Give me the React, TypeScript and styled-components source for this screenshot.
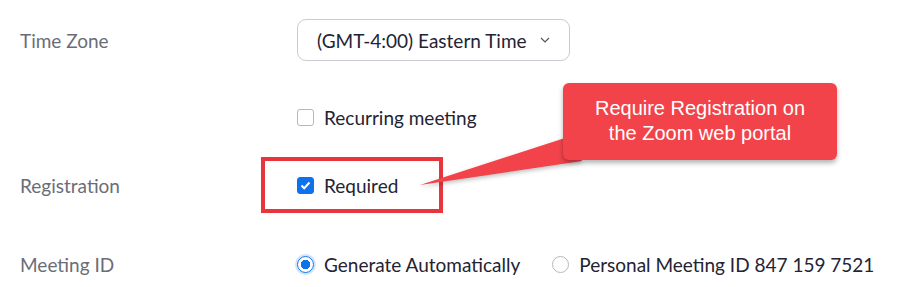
import { FC } from 'react';
import styled, { createGlobalStyle } from 'styled-components';

const GlobalStyle = createGlobalStyle`
  html, body {
    margin: 0;
    padding: 0;
    background: #ffffff;
  }
  body {
    font-family: Lato, 'Noto Sans', sans-serif;
  }
`;

const App: FC = () => {
  return (
    <Page>
      <GlobalStyle />
      <Row $top={19} $height={42}>
        <Label>Time Zone</Label>
        <Select>
          <SelectText>(GMT-4:00) Eastern Time</SelectText>
          <Chevron width="10" height="6" viewBox="0 0 10 6">
            <polyline points="1,1 5,5 9,1" fill="none" stroke="#555" strokeWidth="1.2" />
          </Chevron>
        </Select>
      </Row>

      <Row $top={36} $height={40}>
        <Label />
        <Option>
          <Checkbox />
          <OptionText>Recurring meeting</OptionText>
        </Option>
      </Row>

      <Row $top={20} $height={56}>
        <Label>Registration</Label>
        <Highlight>
          <Option>
            <Checkbox $checked>
              <svg width="11" height="9" viewBox="0 0 11 9">
                <polyline points="1.5,4.5 4.2,7.2 9.5,1.5" fill="none" stroke="#fff" strokeWidth="2" />
              </svg>
            </Checkbox>
            <OptionText>Required</OptionText>
          </Option>
        </Highlight>
      </Row>

      <Row $top={31} $height={40}>
        <Label>Meeting ID</Label>
        <Options>
          <Option>
            <Radio $checked />
            <OptionText>Generate Automatically</OptionText>
          </Option>
          <Option>
            <Radio />
            <OptionText>Personal Meeting ID 847 159 7521</OptionText>
          </Option>
        </Options>
      </Row>

      <Tail width="900" height="287" viewBox="0 0 900 287">
        <polygon points="420,185 565,138 575,150 582,161" fill="#f2434a" />
      </Tail>
      <Callout>
        Require Registration on
        <br />
        the Zoom web portal
      </Callout>
    </Page>
  );
};

const Page = styled.div`
  position: relative;
  width: 900px;
  height: 287px;
  overflow: hidden;
  display: flex;
  flex-direction: column;
`;

const Row = styled.div<{ $top: number; $height: number }>`
  display: flex;
  align-items: center;
  margin-top: ${(p) => p.$top}px;
  height: ${(p) => p.$height}px;
  padding-left: 20px;
`;

const Label = styled.div`
  width: 277px;
  flex-shrink: 0;
  font-size: 19px;
  color: #6a6d78;
`;

const Select = styled.div`
  box-sizing: border-box;
  width: 273px;
  height: 42px;
  border: 1px solid #c9cbd1;
  border-radius: 9px;
  display: flex;
  align-items: center;
  justify-content: space-between;
  padding: 0 19px 0 19px;
`;

const SelectText = styled.span`
  font-size: 19px;
  color: #232333;
`;

const Chevron = styled.svg`
  display: block;
`;

const Options = styled.div`
  display: flex;
  align-items: center;
  gap: 32px;
`;

const Option = styled.div`
  display: flex;
  align-items: center;
  gap: 10px;
`;

const OptionText = styled.span`
  font-size: 19px;
  color: #232333;
`;

const Checkbox = styled.span<{ $checked?: boolean }>`
  box-sizing: border-box;
  width: 17px;
  height: 17px;
  border-radius: 3px;
  border: 1px solid ${(p) => (p.$checked ? '#0e72ed' : '#b5b7bd')};
  background: ${(p) => (p.$checked ? '#0e72ed' : '#fff')};
  display: flex;
  align-items: center;
  justify-content: center;
`;

const Radio = styled.span<{ $checked?: boolean }>`
  box-sizing: border-box;
  width: 17px;
  height: 17px;
  border-radius: 50%;
  border: 1px solid ${(p) => (p.$checked ? '#0e72ed' : '#b5b7bd')};
  background: ${(p) => (p.$checked ? 'radial-gradient(circle, #0e72ed 0 4.5px, #fff 5px)' : '#fff')};
  box-shadow: ${(p) => (p.$checked ? '0 0 0 2px #d4e5fb' : 'none')};
`;

const Highlight = styled.div`
  box-sizing: border-box;
  margin-left: -36px;
  width: 182px;
  height: 56px;
  border: 4px solid #e8353d;
  padding-left: 32px;
  display: flex;
  align-items: center;
`;

const Tail = styled.svg`
  position: absolute;
  left: 0;
  top: 0;
  pointer-events: none;
  filter: drop-shadow(0 2px 2px rgba(0, 0, 0, 0.25));
`;

const Callout = styled.div`
  position: absolute;
  left: 563px;
  top: 83px;
  box-sizing: border-box;
  width: 274px;
  height: 77px;
  padding-top: 13px;
  border-radius: 6px;
  background: #f2434a;
  box-shadow: 0 3px 5px rgba(0, 0, 0, 0.3);
  color: #fff;
  font-family: 'Liberation Sans', Arial, sans-serif;
  font-size: 20px;
  line-height: 25px;
  text-align: center;
`;

export default App;
